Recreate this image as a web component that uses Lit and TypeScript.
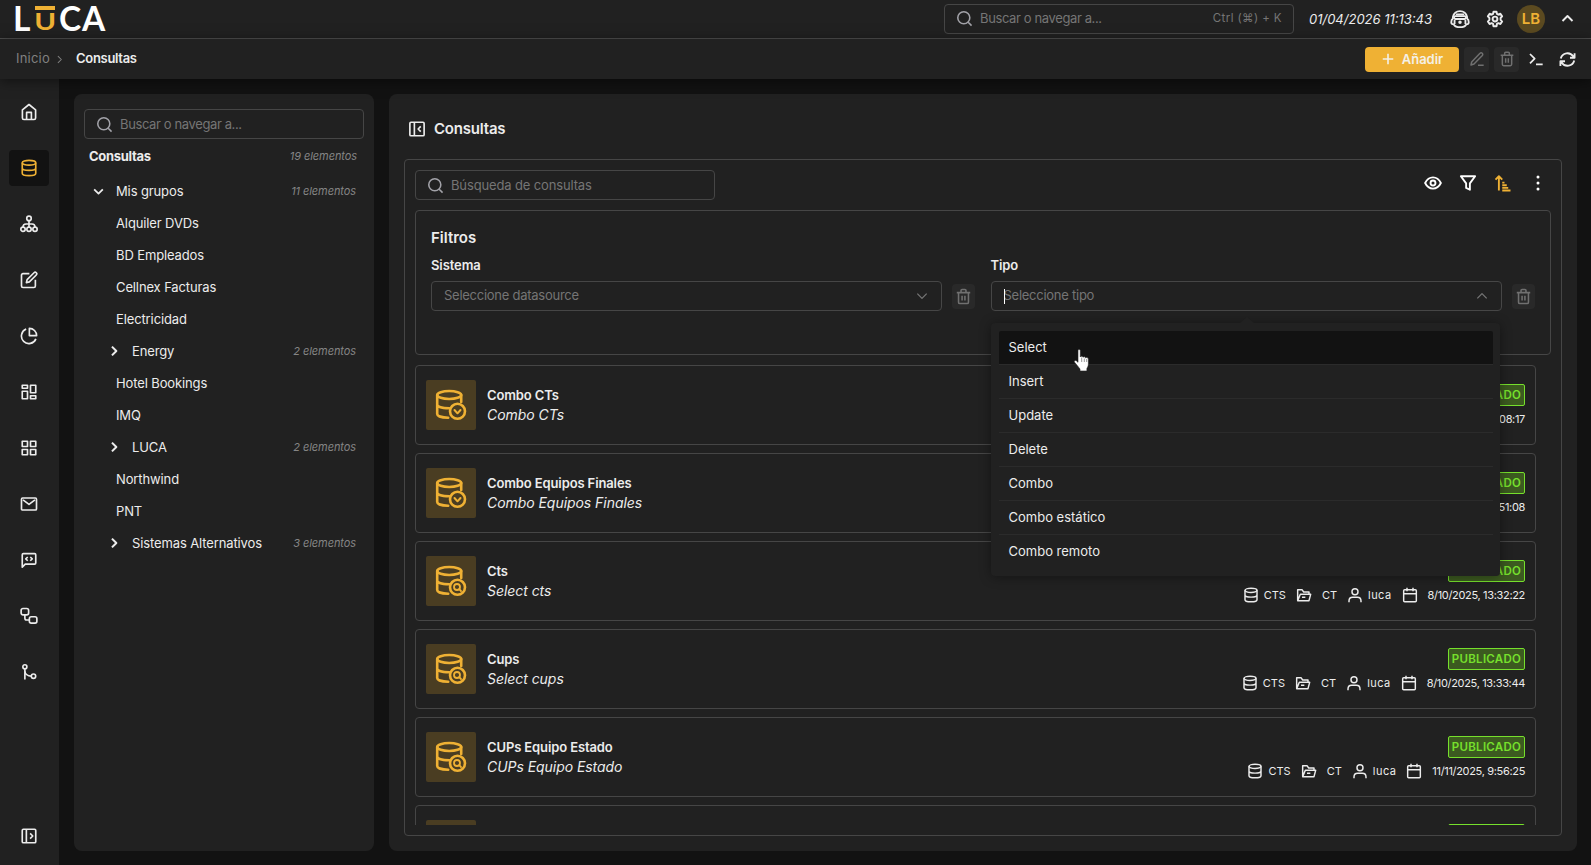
import { LitElement, html, css, svg, nothing } from 'lit'
import { customElement, property } from 'lit/decorators.js'
import { classMap } from 'lit/directives/class-map.js'

const icons: Record<string, unknown> = {
  search: svg`<circle cx="11" cy="11" r="8.5" /><path d="M17.2 17.2L22 22" />`,
  home: svg`<path d="M3.2 9.2L12 2l8.8 7.2V20a2 2 0 0 1-2 2H5.2a2 2 0 0 1-2-2z" /><path d="M8.8 22v-9.5h6.4V22" />`,
  database: svg`<ellipse cx="12" cy="5" rx="9" ry="3.2" /><path d="M3 5v14c0 1.800 4 3.200 9 3.200s9-1.400 9-3.200V5M3 12c0 1.800 4 3.200 9 3.200s9-1.400 9-3.200" />`,
  tree: svg`<circle cx="12" cy="4.5" r="3" /><circle cx="4" cy="19" r="2.900" /><circle cx="12" cy="19" r="2.900" /><circle cx="20" cy="19" r="2.900" /><path d="M12 7.500V16M4 16c0-3 2-4 4-4h8c2 0 4 1 4 4" />`,
  compose: svg`<path d="M12.500 3.500H4a2 2 0 0 0-2 2V20a2 2 0 0 0 2 2h14.500a2 2 0 0 0 2-2v-8.500" /><path d="M18.700 2.300a2 2 0 0 1 3 3L12.500 14.500l-4 1 1-4z" />`,
  pie: svg`<path d="M21.200 15.800A10 10 0 1 1 8.200 2.800" /><path d="M12.500 1.800v9.700h9.700a9.700 9.700 0 0 0-9.700-9.700z" />`,
  dashboard: svg`<path d="M3 3h7v4H3zM3 11h7v10H3zM14 3h7v10h-7zM14 17h7v4h-7z" />`,
  grid: svg`<path d="M3 3h7v7H3zM14 3h7v7h-7zM3 14h7v7H3zM14 14h7v7h-7z" />`,
  mail: svg`<rect x="2" y="4" width="20" height="16" rx="1.5" /><path d="M4 6.500l8 6 8-6" />`,
  chat: svg`<path d="M3 21.500V5a1.500 1.500 0 0 1 1.500-1.500h15A1.500 1.500 0 0 1 21 5v11a1.500 1.500 0 0 1-1.500 1.500H7z" /><path d="M10.300 8l-2.600 2.500 2.600 2.500M13.700 8l2.600 2.500-2.600 2.500" />`,
  flow: svg`<rect x="1.5" y="2" width="10" height="8.5" rx="2.5" /><rect x="12.5" y="13" width="10" height="8.5" rx="2.5" /><path d="M6.500 10.500v4.500a2.300 2.300 0 0 0 2.300 2.300h3.700" />`,
  branch: svg`<circle cx="6.5" cy="5" r="2.7" /><circle cx="18" cy="17.5" r="2.9" /><path d="M6.500 7.800V22M6.500 10c0 5 4 7.500 8.500 7.500" />`,
  expand: svg`<rect x="3" y="3" width="18" height="18" rx="1.5" /><path d="M8.500 3v18M13.500 8.500L17 12l-3.500 3.500" />`,
  collapse: svg`<rect x="2.5" y="3" width="19" height="18" rx="1.5" /><path d="M8.500 3v18M17 8.500L13.500 12l3.500 3.500" />`,
  right: svg`<path d="M8.500 4.500L16 12l-7.500 7.500" />`,
  down: svg`<path d="M4 8l8 8 8-8" />`,
  up: svg`<path d="M4 16l8-8 8 8" />`,
  plus: svg`<path d="M12 3v18M3 12h18" />`,
  edit: svg`<path d="M4 16.500L16.500 3.500a2.300 2.300 0 0 1 3.500 3.200L7.500 19.500 3 21zM13.500 21.500H22" />`,
  trash: svg`<path d="M2.500 6.500h19M5 6.500V20a2 2 0 0 0 2 2h10a2 2 0 0 0 2-2V6.500M8.500 6V3.500A1.500 1.500 0 0 1 10 2h4a1.500 1.500 0 0 1 1.500 1.500V6M10 11v6.500M14 11v6.500" />`,
  terminal: svg`<path d="M3 4.500l7 7-7 7M12 20h10" />`,
  refresh: svg`<path d="M2.500 10.500A9.700 9.700 0 0 1 20 7.500l2 2M22 3v6.500h-6.500M21.500 13.500A9.700 9.700 0 0 1 4 16.500l-2-2M2 21v-6.500h6.500" />`,
  bot: svg`<path d="M3.500 12V9.500C4.500 5 8 2.500 12 2.500s7.500 2.500 8.500 7V12" /><path d="M7 6.500h10" /><rect x="5" y="8.500" width="14" height="3.500" rx="1.500" /><path d="M3.500 11.500C2 12.500 1.500 14 1.500 16s1 2.500 3 2.500C6 21 8.500 21.800 12 21.800s6-.8 7.500-3.300c2 0 3-.5 3-2.500s-.5-3.500-2-4.500M5.500 13v5M18.500 13v5" /><circle cx="12" cy="15.8" r="1" />`,
  gear: svg`<path d="M10 2.300h4l.6 2.900 1.900 1 2.700-1.200 2.300 3.300-2 2.100v2.800l2 2.200-2.300 3.300-2.700-1.100-1.900 1-.6 3.100h-4l-.6-3.100-1.900-1-2.700 1.100-2.300-3.300 2-2.200v-2.800l-2-2.100L4.800 5l2.700 1.200 1.900-1z" /><circle cx="12" cy="12" r="3.2" />`,
  eye: svg`<path d="M1.500 12C4 7 7.500 4.500 12 4.500S20 7 22.500 12C20 17 16.500 19.500 12 19.500S4 17 1.500 12z" /><circle cx="12" cy="12" r="3.3" />`,
  funnel: svg`<path d="M2.500 3h19l-7 9.500V21l-5-2.500v-6z" />`,
  sort: svg`<path d="M6.500 22V3M2 7.500L6.500 3 11 7.500M11 11.500h3M11 15h6M11 18.500h8M11 22h11" />`,
  dots: svg`<path d="M12 4v.1M12 12v.1M12 20v.1" stroke-width="4" stroke-linecap="round" />`,
  folder: svg`<path d="M2.500 20V4h6.500l2.500 3.500h8V11M2.500 20.500l4-9.500H22l-2.500 9.500zM9 15.500h5" />`,
  user: svg`<circle cx="12" cy="7" r="4.5" /><path d="M3 23v-2c0-3.500 2.500-5.500 5.500-5.500h7c3 0 5.500 2 5.500 5.500v2" />`,
  calendar: svg`<rect x="2.5" y="4" width="19" height="18" rx="1.5" /><path d="M2.500 10h19M7.500 1v5.500M16.500 1v5.500" />`,
}

@customElement('luca-icon')
export class LucaIcon extends LitElement {
  static styles = css`
    :host {
      display: inline-flex;
      flex: none;
    }
    svg {
      display: block;
      fill: none;
      stroke: currentColor;
      stroke-linejoin: round;
    }
  `

  @property({ type: String })
  name: string = ''

  @property({ type: Number })
  size: number = 18

  @property({ type: Number })
  weight: number = 2.2

  render() {
    return html`
      <svg viewBox="0 0 24 24" width=${this.size} height=${this.size} stroke-width=${this.weight}>
        ${icons[this.name]}
      </svg>
    `
  }
}

interface Query {
  name: string
  description: string
  kind: 'combo' | 'select'
  date: string
}

@customElement('luca-query-card')
export class LucaQueryCard extends LitElement {
  static styles = css`
    :host {
      display: block;
      flex: none;
    }
    .card {
      display: flex;
      box-sizing: border-box;
      height: 80px;
      padding: 0 10px;
      border: 1px solid #464646;
      border-radius: 4px;
    }
    .thumb {
      width: 50px;
      height: 50px;
      margin-top: 14px;
      border-radius: 2px;
      background: #4a3d22;
    }
    .thumb svg {
      display: block;
      fill: none;
      stroke: #efb134;
      stroke-width: 2.6;
      stroke-linecap: round;
      stroke-linejoin: round;
    }
    .texts {
      flex: 1;
      margin: 19px 0 0 11px;
      line-height: 20px;
    }
    .name {
      font-size: 13px;
      font-weight: 600;
      letter-spacing: -0.12px;
    }
    .description {
      font-size: 14px;
      font-style: italic;
      letter-spacing: -0.05px;
      line-height: 20px;
    }
    .side {
      display: flex;
      flex-direction: column;
      align-items: flex-end;
      padding-top: 18px;
    }
    .status {
      box-sizing: border-box;
      width: 77px;
      height: 22px;
      border: 1px solid #76e02c;
      border-radius: 2px;
      background: #3c5a20;
      color: #76e02c;
      font-size: 11.5px;
      font-weight: 600;
      letter-spacing: 0.3px;
      line-height: 20px;
      text-align: center;
    }
    .meta {
      display: flex;
      align-items: center;
      height: 26px;
      font-size: 11px;
    }
    .cell {
      display: flex;
      align-items: center;
      gap: 5px;
      margin-left: 10px;
    }
    .wide {
      gap: 10px;
    }
    .owner {
      letter-spacing: 0.45px;
    }
    .date {
      letter-spacing: -0.33px;
    }
  `

  @property({ type: Object })
  query!: Query

  render() {
    const badge = this.query.kind === 'combo'
      ? svg`<path d="M28.500 30l3 3.300 3-3.300" stroke-width="2" />`
      : svg`<circle cx="31" cy="31" r="3" stroke-width="1.8" /><path d="M33.200 33.200l1.800 1.800" stroke-width="1.8" />`

    return html`
      <div class="card">
        <div class="thumb">
          <svg width="50" height="50" viewBox="0 0 50 50">
            <ellipse cx="23.2" cy="15" rx="12" ry="4" />
            <path d="M11.200 15v19c0 2 4.500 3.600 11 3.800M35.200 15v7M11.200 24.500c0 2.300 5 3.700 12 3.700" />
            <circle cx="31.5" cy="31.3" r="7.5" />
            ${badge}
          </svg>
        </div>
        <div class="texts">
          <div class="name">${this.query.name}</div>
          <div class="description">${this.query.description}</div>
        </div>
        <div class="side">
          <div class="status">PUBLICADO</div>
          <div class="meta">
            <span class="cell"><luca-icon name="database" size="16"></luca-icon>CTS</span>
            <span class="cell wide"><luca-icon name="folder" size="16"></luca-icon>CT</span>
            <span class="cell owner"><luca-icon name="user" size="16"></luca-icon>luca</span>
            <span class="cell wide date"><luca-icon name="calendar" size="16"></luca-icon>${this.query.date}</span>
          </div>
        </div>
      </div>
    `
  }
}

@customElement('app-root')
export class AppRoot extends LitElement {
  static styles = css`
    :host {
      --surface: #212121;
      --background: #121212;
      --line: #464646;
      --primary: #efb134;
      --muted: #757575;
      display: flex;
      flex-direction: column;
      height: 865px;
      overflow: hidden;
      background: var(--background);
      color: #ececec;
      font-family: Inter, 'Liberation Sans', sans-serif;
      font-size: 13px;
    }

    .header {
      display: flex;
      align-items: center;
      box-sizing: border-box;
      height: 39px;
      padding: 0 16px 1px 13px;
      border-bottom: 1px solid #505050;
      background: var(--surface);
    }
    .logo {
      display: flex;
      width: 97px;
      height: 38px;
      color: #fff;
      font-family: Lato, sans-serif;
      font-size: 33.5px;
      font-weight: 700;
      line-height: 36px;
    }
    .letterL {
      width: 19px;
    }
    .letterU {
      display: flex;
      flex-direction: column;
      align-items: center;
      box-sizing: border-box;
      width: 20px;
      height: 38px;
      margin: 0 4px 0 3px;
      padding-top: 6px;
      color: var(--primary);
      font-size: 22px;
      line-height: 28px;
    }
    .letterU::before {
      content: '';
      flex: none;
      width: 20px;
      height: 4px;
      background: var(--primary);
    }
    .stretch {
      margin-top: -2px;
      transform: scaleX(1.34);
    }
    .letterC {
      width: 23px;
    }
    .letterA {
      width: 28px;
    }
    .search {
      display: flex;
      align-items: center;
      box-sizing: border-box;
      height: 30px;
      padding: 0 11px;
      border: 1px solid var(--line);
      border-radius: 4px;
      color: var(--muted);
      letter-spacing: -0.38px;
    }
    .search luca-icon {
      margin-right: 7px;
      color: #a2a2a8;
    }
    .search span {
      padding-bottom: 1px;
    }
    .global {
      width: 350px;
      margin-left: auto;
    }
    .global .shortcut {
      margin-left: auto;
      font-size: 11.5px;
      letter-spacing: 0.4px;
    }
    .clock {
      width: 124px;
      margin: 0 17px 0 15px;
      font-style: italic;
      letter-spacing: 0;
      white-space: nowrap;
    }
    .avatar {
      width: 28px;
      height: 28px;
      margin: 0 15px 0 13px;
      border-radius: 50%;
      background: #5b4a20;
      color: var(--primary);
      font-size: 15px;
      font-weight: 600;
      line-height: 28px;
      text-align: center;
    }
    .header .gear {
      margin-left: 16px;
    }

    .subheader {
      position: relative;
      display: flex;
      align-items: center;
      flex: none;
      box-sizing: border-box;
      height: 40px;
      padding: 0 15px 0 16px;
      background: var(--surface);
      box-shadow: 0 2px 12px rgba(0, 0, 0, 0.5);
    }
    .crumb {
      width: 38px;
      padding-bottom: 2px;
      color: #808080;
      letter-spacing: 0.2px;
    }
    .crumb + luca-icon {
      margin-right: 11px;
      color: #808080;
    }
    .current {
      padding-bottom: 2px;
      font-weight: 600;
      letter-spacing: -0.3px;
    }
    .add {
      display: flex;
      align-items: center;
      justify-content: center;
      gap: 7px;
      width: 94px;
      height: 25px;
      margin-left: auto;
      border-radius: 4px;
      background: var(--primary);
      color: #f4f0e6;
      font-weight: 600;
    }
    .square {
      display: flex;
      align-items: center;
      justify-content: center;
      width: 25px;
      height: 25px;
      margin-left: 5px;
      border-radius: 4px;
      background: #292929;
      color: #707070;
    }
    .terminal {
      margin: 0 15px 0 9px;
    }

    .body {
      display: flex;
      flex: 1;
      min-height: 0;
    }
    .rail {
      display: flex;
      flex-direction: column;
      align-items: center;
      gap: 20px;
      box-sizing: border-box;
      width: 59px;
      padding: 15px 1px 11px 0;
      background: var(--surface);
    }
    .railItem {
      display: flex;
      align-items: center;
      justify-content: center;
      width: 40px;
      height: 36px;
      border-radius: 4px;
    }
    .railActive {
      background: var(--background);
      color: var(--primary);
    }
    .railLast {
      margin-top: auto;
    }

    .panels {
      display: grid;
      grid-template-columns: 300px 1fr;
      gap: 15px;
      flex: 1;
      padding: 15px 14px 14px 15px;
    }
    .panel {
      box-sizing: border-box;
      min-width: 0;
      min-height: 0;
      border-radius: 8px;
      background: var(--surface);
    }
    .groups {
      padding: 15px 10px;
    }
    .groupsHead {
      display: flex;
      align-items: center;
      justify-content: space-between;
      height: 34px;
      margin-bottom: 2px;
      padding: 0 7px 0 5px;
      font-weight: 700;
      letter-spacing: -0.3px;
    }
    .count {
      color: #858585;
      font-size: 11px;
      font-style: italic;
      font-weight: 400;
      letter-spacing: -0.08px;
    }
    .node {
      display: flex;
      align-items: center;
      height: 32px;
      padding: 0 8px 0 32px;
      letter-spacing: -0.12px;
    }
    .node luca-icon {
      width: 25px;
      margin-left: -9px;
    }
    .node .count {
      margin-left: auto;
    }
    .root {
      padding-left: 8px;
    }
    .root luca-icon {
      width: 24px;
      margin-left: 0;
    }

    .content {
      display: flex;
      flex-direction: column;
      padding: 15px;
    }
    .title {
      display: flex;
      align-items: center;
      gap: 8px;
      height: 39px;
      margin-bottom: 11px;
      padding-left: 4px;
      font-size: 15px;
      font-weight: 600;
      letter-spacing: -0.2px;
    }
    .box {
      display: flex;
      flex-direction: column;
      flex: 1;
      min-height: 0;
      padding: 10px;
      border: 1px solid var(--line);
      border-radius: 4px;
    }
    .toolbar {
      display: flex;
      align-items: center;
    }
    .toolbar .search {
      width: 300px;
      letter-spacing: -0.14px;
    }
    .tools {
      display: flex;
      gap: 17px;
      margin: 0 4px 4px auto;
      color: #fff;
    }
    .sorted {
      color: var(--primary);
    }
    .filters {
      display: grid;
      grid-template-columns: 1fr 1fr;
      grid-template-rows: 34px 20px 1fr;
      column-gap: 15px;
      box-sizing: border-box;
      flex: none;
      height: 145px;
      margin: 10px 0;
      padding: 10px 15px 0;
      border: 1px solid var(--line);
      border-radius: 4px;
    }
    .filtersTitle {
      grid-column: 1 / 3;
      font-size: 15px;
      font-weight: 600;
      line-height: 34px;
    }
    .label {
      font-weight: 600;
      letter-spacing: -0.1px;
      line-height: 21px;
    }
    .field {
      display: flex;
      align-items: center;
      height: 30px;
      margin-top: 6px;
      padding-right: 0.5px;
    }
    .select {
      position: relative;
      display: flex;
      align-items: center;
      justify-content: space-between;
      flex: 1;
      box-sizing: border-box;
      height: 30px;
      padding: 0 12px;
      border: 1px solid var(--line);
      border-radius: 4px;
      color: var(--muted);
      letter-spacing: -0.26px;
    }
    .select span {
      padding-bottom: 2px;
    }
    .focused::before {
      content: '';
      position: absolute;
      left: 12px;
      width: 1px;
      height: 15px;
      background: #fff;
    }
    .field .square {
      width: 23px;
      margin-left: 10px;
    }
    .list {
      display: flex;
      flex-direction: column;
      gap: 8px;
      flex: 1;
      min-height: 0;
      padding-right: 15px;
      overflow: hidden;
    }

    .menu {
      position: absolute;
      z-index: 2;
      top: 41px;
      left: -1px;
      box-sizing: border-box;
      width: 509px;
      height: 253px;
      padding: 8px 7px 7px 8px;
      border-radius: 4px;
      background: var(--surface);
      box-shadow: 0 1px 12px rgba(0, 0, 0, 0.4);
      color: #ececec;
      letter-spacing: 0;
    }
    .menu::before {
      content: '';
      position: absolute;
      top: -6px;
      left: 249px;
      border: 7px solid transparent;
      border-top: none;
      border-bottom: 6px solid var(--surface);
    }
    .option {
      box-sizing: border-box;
      height: 34px;
      padding-left: 10px;
      border-bottom: 1px solid #2b2b2b;
      line-height: 33px;
    }
    .option:last-child {
      border-bottom: none;
    }
    .hovered {
      border-radius: 2px 2px 0 0;
      background: var(--background);
    }
    .pointer {
      position: absolute;
      z-index: 3;
      top: 67px;
      left: 81px;
    }
  `

  rail = ['home', 'database', 'tree', 'compose', 'pie', 'dashboard', 'grid', 'mail', 'chat', 'flow', 'branch']

  groups = [
    { name: 'Alquiler DVDs' },
    { name: 'BD Empleados' },
    { name: 'Cellnex Facturas' },
    { name: 'Electricidad' },
    { name: 'Energy', count: 2 },
    { name: 'Hotel Bookings' },
    { name: 'IMQ' },
    { name: 'LUCA', count: 2 },
    { name: 'Northwind' },
    { name: 'PNT' },
    { name: 'Sistemas Alternativos', count: 3 },
  ]

  types = ['Select', 'Insert', 'Update', 'Delete', 'Combo', 'Combo estático', 'Combo remoto']

  queries: Query[] = [
    { name: 'Combo CTs', description: 'Combo CTs', kind: 'combo', date: '8/10/2025, 14:08:17' },
    { name: 'Combo Equipos Finales', description: 'Combo Equipos Finales', kind: 'combo', date: '8/10/2025, 13:51:08' },
    { name: 'Cts', description: 'Select cts', kind: 'select', date: '8/10/2025, 13:32:22' },
    { name: 'Cups', description: 'Select cups', kind: 'select', date: '8/10/2025, 13:33:44' },
    { name: 'CUPs Equipo Estado', description: 'CUPs Equipo Estado', kind: 'select', date: '11/11/2025, 9:56:25' },
    { name: '', description: '', kind: 'select', date: '' },
  ]

  renderHeader() {
    return html`
      <header class="header">
        <div class="logo">
          <span class="letterL">L</span>
          <span class="letterU"><span class="stretch">U</span></span>
          <span class="letterC">C</span>
          <span class="letterA">A</span>
        </div>
        <div class="search global">
          <luca-icon name="search" size="17"></luca-icon>
          <span>Buscar o navegar a...</span>
          <span class="shortcut">Ctrl (⌘) + K</span>
        </div>
        <span class="clock">01/04/2026 11:13:43</span>
        <luca-icon name="bot" size="20"></luca-icon>
        <luca-icon class="gear" name="gear" size="18" weight="2.6"></luca-icon>
        <span class="avatar">LB</span>
        <luca-icon name="up" size="15" weight="3"></luca-icon>
      </header>
      <div class="subheader">
        <span class="crumb">Inicio</span>
        <luca-icon name="right" size="11"></luca-icon>
        <span class="current">Consultas</span>
        <div class="add"><luca-icon name="plus" size="14" weight="2.8"></luca-icon>Añadir</div>
        <div class="square"><luca-icon name="edit" size="16"></luca-icon></div>
        <div class="square"><luca-icon name="trash" size="16"></luca-icon></div>
        <luca-icon class="terminal" name="terminal" size="16" weight="2.6"></luca-icon>
        <luca-icon name="refresh" size="17" weight="2.6"></luca-icon>
      </div>
    `
  }

  renderGroups() {
    return html`
      <section class="panel groups">
        <div class="search">
          <luca-icon name="search" size="17"></luca-icon>
          <span>Buscar o navegar a...</span>
        </div>
        <div class="groupsHead">Consultas<span class="count">19 elementos</span></div>
        <div class="node root">
          <luca-icon name="down" size="13" weight="3.2"></luca-icon>
          <span>Mis grupos</span>
          <span class="count">11 elementos</span>
        </div>
        ${this.groups.map(group => html`
          <div class="node">
            ${group.count ? html`<luca-icon name="right" size="14" weight="3.5"></luca-icon>` : nothing}
            <span>${group.name}</span>
            ${group.count ? html`<span class="count">${group.count} elementos</span>` : nothing}
          </div>
        `)}
      </section>
    `
  }

  renderFilters() {
    return html`
      <div class="filters">
        <div class="filtersTitle">Filtros</div>
        <div class="label">Sistema</div>
        <div class="label">Tipo</div>
        <div class="field">
          <div class="select">
            <span>Seleccione datasource</span>
            <luca-icon name="down" size="14"></luca-icon>
          </div>
          <div class="square"><luca-icon name="trash" size="17"></luca-icon></div>
        </div>
        <div class="field">
          <div class="select focused">
            <span>Seleccione tipo</span>
            <luca-icon name="up" size="14"></luca-icon>
            <div class="menu">
              ${this.types.map((type, i) => html`
                <div class=${classMap({ option: true, hovered: i === 0 })}>${type}</div>
              `)}
            </div>
            <svg class="pointer" width="18" height="24" viewBox="0 0 18 24">
              <path
                d="M5 1.500c0-1.300 2.300-1.300 2.300 0V8c.5-1.300 2.600-1 2.700.3.600-1 2.500-.7 2.600.7.800-.9 2.800-.4 2.800 1.200V15c0 2-.9 3.200-1.500 4.500V22H7v-2c-1.500-2-3.500-4.300-5.500-6.800-.8-1.200.6-2.400 1.800-1.500L5 13.300z"
                fill="#fff" stroke="#222" stroke-width="0.6"
              />
              <path d="M8.700 13V8.500M11.300 13V9.500M13.700 13v-3" fill="none" stroke="#333" stroke-width="0.5" />
            </svg>
          </div>
          <div class="square"><luca-icon name="trash" size="17"></luca-icon></div>
        </div>
      </div>
    `
  }

  render() {
    return html`
      ${this.renderHeader()}
      <div class="body">
        <nav class="rail">
          ${this.rail.map(name => html`
            <div class=${classMap({ railItem: true, railActive: name === 'database' })}>
              <luca-icon name=${name}></luca-icon>
            </div>
          `)}
          <div class="railItem railLast"><luca-icon name="expand"></luca-icon></div>
        </nav>
        <main class="panels">
          ${this.renderGroups()}
          <section class="panel content">
            <div class="title"><luca-icon name="collapse"></luca-icon>Consultas</div>
            <div class="box">
              <div class="toolbar">
                <div class="search">
                  <luca-icon name="search" size="17"></luca-icon>
                  <span>Búsqueda de consultas</span>
                </div>
                <div class="tools">
                  <luca-icon name="eye" weight="2.5"></luca-icon>
                  <luca-icon name="funnel" weight="2.5"></luca-icon>
                  <luca-icon class="sorted" name="sort" weight="2.5"></luca-icon>
                  <luca-icon name="dots"></luca-icon>
                </div>
              </div>
              ${this.renderFilters()}
              <div class="list">
                ${this.queries.map(query => html`<luca-query-card .query=${query}></luca-query-card>`)}
              </div>
            </div>
          </section>
        </main>
      </div>
    `
  }
}

declare global {
  interface HTMLElementTagNameMap {
    'luca-icon': LucaIcon,
    'luca-query-card': LucaQueryCard,
    'app-root': AppRoot,
  }
}
